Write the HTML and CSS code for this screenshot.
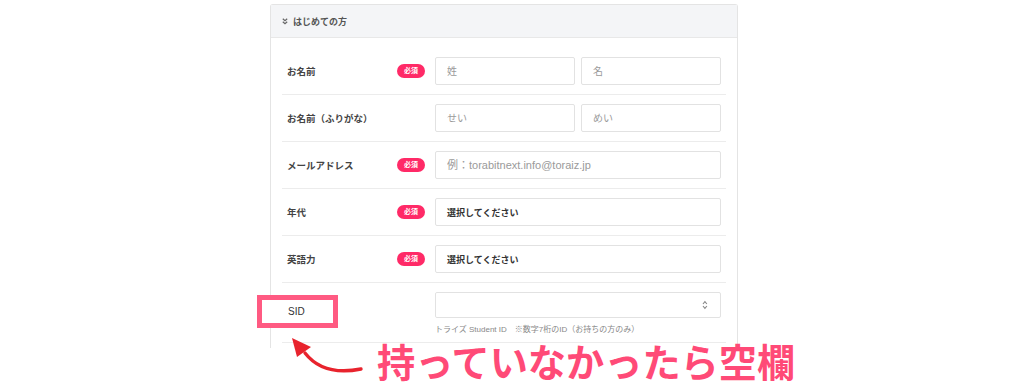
FILE: index.html
```html
<!DOCTYPE html>
<html lang="ja">
<head>
    <meta charset="UTF-8">
    <meta name="viewport" content="width=device-width, initial-scale=1.0">
    <title>はじめての方</title>
    <link rel="stylesheet" href="styles.css">
</head>
<body>
    <div class="panel">
        <div class="panel-head">
            <svg class="chev" width="6" height="7" viewBox="0 0 6 7"><path d="M0.8 0.8 L3 2.8 L5.2 0.8 M0.8 3.8 L3 5.8 L5.2 3.8" fill="none" stroke="#666" stroke-width="1.2"/></svg>
            はじめての方
        </div>
        <div class="panel-body">
            <div class="row">
                <div class="label">お名前</div>
                <span class="badge">必須</span>
                <div class="field split">
                    <input type="text" placeholder="姓">
                    <input type="text" placeholder="名">
                </div>
            </div>
            <div class="row">
                <div class="label">お名前（ふりがな）</div>
                <span class="badge empty"></span>
                <div class="field split">
                    <input type="text" placeholder="せい">
                    <input type="text" placeholder="めい">
                </div>
            </div>
            <div class="row">
                <div class="label">メールアドレス</div>
                <span class="badge">必須</span>
                <div class="field">
                    <input type="text" class="mail" placeholder="例：torabitnext.info@toraiz.jp">
                </div>
            </div>
            <div class="row">
                <div class="label">年代</div>
                <span class="badge">必須</span>
                <div class="field">
                    <div class="select">選択してください</div>
                </div>
            </div>
            <div class="row">
                <div class="label">英語力</div>
                <span class="badge">必須</span>
                <div class="field">
                    <div class="select">選択してください</div>
                </div>
            </div>
            <div class="row sid-row">
                <div class="label sid-label">SID</div>
                <span class="badge empty"></span>
                <div class="field">
                    <div class="number">
                        <input type="text">
                        <svg width="6" height="10" viewBox="0 0 6 10"><path d="M1 4 L3 1.5 L5 4 M1 6 L3 8.5 L5 6" fill="none" stroke="#888" stroke-width="1.1"/></svg>
                    </div>
                    <p class="hint">トライズ Student ID　※数字7桁のID（お持ちの方のみ）</p>
                </div>
            </div>
        </div>
    </div>

    <!-- annotation -->
    <div class="mark-box">SID</div>
    <svg class="arrow" width="90" height="45" viewBox="0 0 90 45">
        <path d="M72 32 C52 36 30 34 16 16" fill="none" stroke="#e8232d" stroke-width="3.4" stroke-linecap="round"/>
        <path d="M3 1 L22 10 L8 20 Z" fill="#e8232d"/>
    </svg>
    <div class="note">持っていなかったら空欄</div>
</body>
</html>
```

FILE: styles.css
```css
body {
    margin: 0;
    background: #fff;
    font-family: "Liberation Sans", "Noto Sans CJK JP", sans-serif;
    color: #333;
    position: relative;
    height: 391px;
    overflow: hidden;
}
.panel {
    width: 466px;
    margin: 4px 0 0 270px;
    border: 1px solid #e4e4e4;
    border-bottom: none;
    border-radius: 3px 3px 0 0;
}
.panel-head {
    height: 32px;
    display: flex;
    align-items: center;
    gap: 5px;
    padding-left: 11px;
    background: #f4f5f7;
    border-bottom: 1px solid #e8e8e8;
    font-size: 9px;
    color: #555;
    font-weight: 700;
}
.panel-body {
    padding: 10px 11px 5px;
}
.row {
    display: flex;
    align-items: center;
    padding: 0 5px;
    height: 46px;
    border-bottom: 1px solid #ececec;
}
.label {
    flex: 1;
    font-size: 9.5px;
    font-weight: 700;
    color: #444;
}
.badge {
    width: 28px;
    height: 14px;
    line-height: 14px;
    border-radius: 7px;
    background: #ff2a67;
    color: #fff;
    font-size: 7px;
    font-weight: 700;
    text-align: center;
    margin-right: 10px;
}
.badge.empty {
    background: none;
}
.field {
    width: 286px;
}
.split {
    display: flex;
    gap: 6px;
}
input[type="text"] {
    display: block;
    width: 100%;
    height: 28px;
    box-sizing: border-box;
    border: 1px solid #e2e2e2;
    border-radius: 2px;
    padding: 0 11px;
    font-family: inherit;
    font-size: 10px;
    color: #333;
    outline: none;
}
input.mail {
    font-size: 11px;
}
.split input[type="text"] {
    width: 140px;
}
input::placeholder {
    color: #9a9a9a;
}
.select {
    height: 28px;
    box-sizing: border-box;
    border: 1px solid #e2e2e2;
    border-radius: 2px;
    padding: 0 11px;
    display: flex;
    align-items: center;
    font-size: 9px;
    font-weight: 700;
    color: #333;
}
.sid-row {
    height: 59px;
    align-items: flex-start;
}
.sid-row .field {
    margin-top: 9px;
}
.sid-label {
    margin-top: 21px;
}
.number {
    display: flex;
    align-items: center;
    height: 26px;
    box-sizing: border-box;
    border: 1px solid #e2e2e2;
    border-radius: 2px;
    padding-right: 12px;
}
.number input[type="text"] {
    border: none;
    height: 24px;
}
.hint {
    margin: 5px 0 0;
    font-size: 8px;
    color: #888;
}
.mark-box {
    position: absolute;
    left: 257px;
    top: 295px;
    width: 81px;
    height: 33px;
    box-sizing: border-box;
    border: 5px solid #ff5a82;
    background: #fff;
    font-size: 10px;
    color: #333;
    padding-left: 26px;
    line-height: 23px;
}
.arrow {
    position: absolute;
    left: 289px;
    top: 337px;
}
.note {
    position: absolute;
    left: 377px;
    top: 337px;
    font-family: "Noto Sans CJK JP", sans-serif;
    font-size: 38.2px;
    font-weight: 700;
    color: #ff4a77;
    line-height: 48px;
    white-space: nowrap;
}
```
